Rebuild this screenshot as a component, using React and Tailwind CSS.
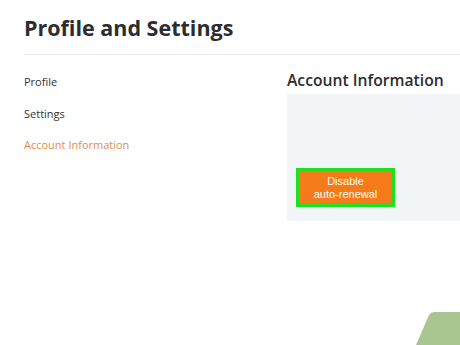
export default function App() {
  return (
    <div className="relative w-[460px] h-[345px] overflow-hidden bg-white" style={{ fontFamily: "Montserrat, 'Noto Sans', sans-serif" }}>
      <div className="pl-6 pt-[14px]">
        <h1 className="text-[21.5px] leading-[28px] font-bold text-[#2b2d30]" style={{ fontFamily: "'Open Sans', sans-serif" }}>Profile and Settings</h1>
        <div className="mt-[12px] h-px bg-[#e8e9ea]" />
        <div className="flex">
          <nav className="w-[263px] pt-[19px] flex flex-col gap-[16.5px] text-[11px] leading-[15px] text-[#333]" style={{ fontFamily: "'Open Sans', sans-serif" }}>
            <span>Profile</span>
            <span>Settings</span>
            <span className="text-[#e58b4a]">Account Information</span>
          </nav>
          <div className="flex-1 pt-[15px]">
            <h2 className="text-[15.7px] leading-[20px] font-semibold text-[#2b2d30]" style={{ fontFamily: "'Open Sans', sans-serif" }}>Account Information</h2>
            <div className="mt-[4px] h-[127px] bg-[#f2f5f8] pl-[9px] pt-[74px]">
              <div className="w-[99px] h-[39px] bg-[#f47a1a] border-[3px] border-[#1fe01f] flex flex-col items-center justify-center text-white text-[11px] leading-[13px]" style={{ fontFamily: "'Liberation Sans', Arial, sans-serif" }}>
                <span>Disable</span>
                <span>auto-renewal</span>
              </div>
            </div>
          </div>
        </div>
      </div>
      <svg className="absolute right-0 bottom-0" width="46" height="34" viewBox="0 0 46 34">
        <path d="M2 34 L15 4 Q17 1 20 1 L46 1 L46 34 Z" fill="#a9c690" />
      </svg>
    </div>
  );
}
